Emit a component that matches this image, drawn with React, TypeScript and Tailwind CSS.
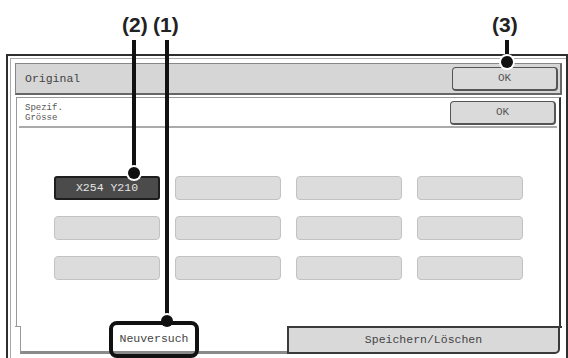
const mono = "font-['Liberation_Mono','Courier_New',monospace]";

function KeyButton({ label }: { label: string }) {
  return (
    <div className="flex h-[24px] w-[106px] items-center justify-center rounded-[4px] border border-[#555] border-b-2 border-r-2 bg-[#dadada] text-[11px] text-[#555]">
      {label}
    </div>
  );
}

function Callout({ x, top, bottom, label, labelX }: { x: number; top: number; bottom: number; label?: string; labelX?: number }) {
  return (
    <>
      {label && (
        <span
          className="absolute top-[14px] font-['Liberation_Sans',Arial,sans-serif] text-[21px] font-bold leading-none text-[#222]"
          style={{ left: labelX }}
        >
          {label}
        </span>
      )}
      <div className="absolute w-[4px] bg-[#111]" style={{ left: x - 2, top, height: bottom - top }} />
      <div
        className="absolute h-[12px] w-[12px] rounded-full bg-[#111] ring-2 ring-white"
        style={{ left: x - 6, top: bottom - 6 }}
      />
    </>
  );
}

export default function App() {
  const cells = Array.from({ length: 12 }, (_, i) => i);

  return (
    <div className={`relative h-[358px] w-[568px] overflow-hidden bg-white ${mono}`}>
      <div className="h-[54px]" />

      {/* outer machine frame */}
      <div className="ml-[6px] h-[304px] w-[562px] border-2 border-b-0 border-[#2e2e2e] pl-[2px] pt-[2px]">
        <div className="h-full border-l border-t border-[#aaa] pl-[4px] pr-[4px] pt-[4px]">
          {/* title bar */}
          <div className="flex h-[32px] items-center justify-between border border-[#888] border-b-2 border-r-2 border-b-[#666] border-r-[#666] bg-[#d6d6d6] pl-[9px] pr-[2px]">
            <span className="text-[11.5px] text-[#444]">Original</span>
            <KeyButton label="OK" />
          </div>

          {/* settings panel */}
          <div className="mx-[1px] mt-[2px] border-l border-t border-r-2 border-[#999] border-r-[#333]">
            <div className="mx-[2px] flex h-[30px] items-start justify-between border-b-2 border-[#aaa] pl-[6px] pr-[1px] pt-[3px]">
              <div className="pt-[2px] text-[9px] leading-[10px] text-[#555]">
                <div>Spezif.</div>
                <div>Grösse</div>
              </div>
              <KeyButton label="OK" />
            </div>

            <div className="grid grid-cols-[repeat(4,106px)] gap-x-[15px] gap-y-[16px] pb-[46px] pl-[37px] pt-[48px]">
              {cells.map((i) =>
                i === 0 ? (
                  <div
                    key={i}
                    className="flex h-[24px] items-center justify-center rounded-[3px] border-2 border-[#1e1e1e] bg-[#4b4b4b] text-[11.5px] text-[#e4e4e4]"
                  >
                    X254 Y210
                  </div>
                ) : (
                  <div key={i} className="h-[24px] rounded-[4px] border border-[#c2c2c2] bg-[#dcdcdc]" />
                )
              )}
            </div>
          </div>

          {/* tabs */}
          <div className="flex h-[28px]">
            <div className="w-[5px] border-t border-[#999]" />
            <div className="flex w-[267px] items-center justify-center border-b-[3px] border-l border-[#999] border-b-[#8a8a8a] text-[11.5px] text-[#444]">
              Neuversuch
            </div>
            <div className="flex flex-1 items-center justify-center rounded-br-[5px] border-2 border-[#3a3a3a] bg-[#d9d9d9] text-[11.5px] text-[#444]">
              Speichern/Löschen
            </div>
            <div className="w-[2px] border-t-2 border-[#333]" />
          </div>
        </div>
      </div>

      {/* callouts */}
      <Callout label="(2)" labelX={122} x={134} top={40} bottom={173} />
      <Callout label="(1)" labelX={153} x={167} top={40} bottom={321} />
      <Callout label="(3)" labelX={492} x={507} top={40} bottom={62} />
      <div className="absolute left-[109px] top-[321px] h-[37px] w-[90px] rounded-[8px] border-4 border-[#111]" />
    </div>
  );
}
